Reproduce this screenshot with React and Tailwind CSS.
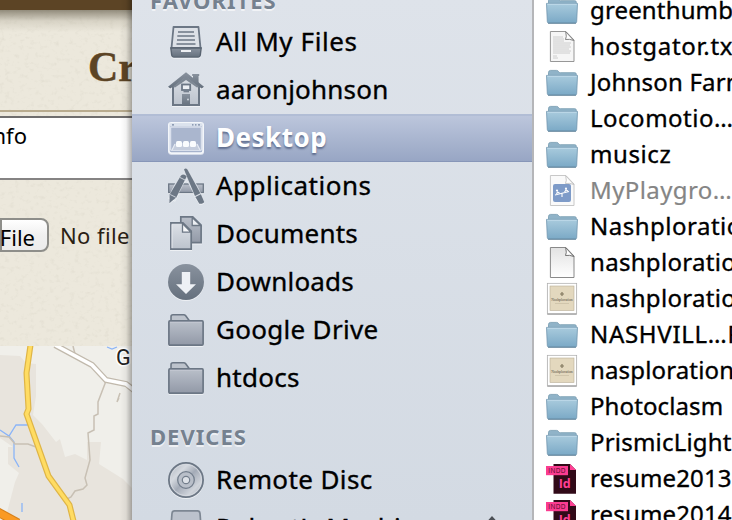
import React from "react";

const INK = "#6c7785";

function Defs() {
  return (
    <svg className="absolute h-0 w-0" aria-hidden="true">
      <defs>
        <linearGradient id="slate" x1="0" y1="0" x2="0" y2="1">
          <stop offset="0" stopColor="#89929e" />
          <stop offset="1" stopColor="#65707d" />
        </linearGradient>
        <linearGradient id="pane" x1="0" y1="0" x2="0" y2="1">
          <stop offset="0" stopColor="#bac0ca" />
          <stop offset="1" stopColor="#9299a7" />
        </linearGradient>
        <linearGradient id="light" x1="0" y1="0" x2="0" y2="1">
          <stop offset="0" stopColor="#dde1e7" />
          <stop offset="1" stopColor="#bcc3cd" />
        </linearGradient>
        <linearGradient id="disc" x1="0" y1="0" x2="1" y2="1">
          <stop offset="0" stopColor="#a9b0ba" />
          <stop offset="0.3" stopColor="#d5d9df" />
          <stop offset="0.5" stopColor="#a4abb7" />
          <stop offset="0.75" stopColor="#d0d4db" />
          <stop offset="1" stopColor="#a0a8b3" />
        </linearGradient>
        <linearGradient id="blue" x1="0" y1="0" x2="0" y2="1">
          <stop offset="0" stopColor="#a9cbdd" />
          <stop offset="1" stopColor="#7ba9c6" />
        </linearGradient>
        <linearGradient id="sheet" x1="0" y1="0" x2="0" y2="1">
          <stop offset="0" stopColor="#e2e2e2" />
          <stop offset="1" stopColor="#ffffff" />
        </linearGradient>
        <filter id="grain" x="0" y="0" width="100%" height="100%">
          <feTurbulence type="fractalNoise" baseFrequency="0.2 0.24" numOctaves="3" seed="8" />
          <feColorMatrix values="0 0 0 0 0.6  0 0 0 0 0.57  0 0 0 0 0.48  0 0 0 1.6 -0.85" />
        </filter>
      </defs>
    </svg>
  );
}

const sideIcons = {
  files: (
    <>
      <path d="M5.500 3h25l2 21h-29z" fill="#dde1e7" stroke={INK} strokeWidth="1.800" strokeLinejoin="round" />
      <path d="M10 8h16M9.300 12h17.400M9 16h18M8.500 20h19" stroke={INK} strokeWidth="1.600" />
      <path d="M2.800 24h30.400l-.9 7.200q-.3 1.900-2 1.900H5.700q-1.700 0-2-1.900z" fill="url(#slate)" stroke="#596471" strokeWidth="1.400" />
      <path d="M13 27h10" stroke="#eef0f3" strokeWidth="2" />
    </>
  ),
  home: (
    <>
      <path d="M25 12V4h-.8V2h7v2h-.6v9z" fill="url(#slate)" />
      <path d="M5 14 18 3l13 11v19H5z" fill="url(#light)" stroke={INK} strokeWidth="2" />
      <path d="M18 .200 36 14.800l-2.200 1.800L31 14.800 18 4.800 5 14.800l-2.800 1.800L0 14.800z" fill="url(#slate)" />
      <path d="M5 14.800 18 4.200l13 10.600-2 .7L18 8 7 15.500z" fill="#7d8793" />
      <rect x="14" y="12.500" width="8.200" height="5.500" fill="#eceff3" stroke={INK} strokeWidth="1.800" />
      <path d="M15.500 19.700h5.500" stroke={INK} strokeWidth="1.200" />
      <path d="M14 22h8v12h-8z" fill="url(#slate)" />
      <circle cx="20" cy="27.500" r=".9" fill="#d5dae1" />
    </>
  ),
  desktop: (
    <>
      <rect x=".9" y="2.900" width="34.200" height="30.200" rx="2.400" fill="#a6b3cd" stroke="#f3f6fa" strokeWidth="1.800" />
      <path d="M1.500 3.200h33v3.200h-33z" fill="#dbe2ed" />
      <path d="M2.700 7.100h30.600v23.200H2.700z" fill="#aab6ce" stroke="#eef2f8" strokeWidth=".9" />
      <path d="M4 4.900h2M24 4.900h1.500M27 4.900h1.500M30 4.900h2" stroke="#7786a3" strokeWidth="1.400" />
      <path d="M8 23h20l4 7H4z" fill="#c5cddd" />
      <g fill="#fafcfe"><rect x="8" y="21" width="6" height="6" rx="1.600" /><rect x="15" y="21" width="6" height="6" rx="1.600" /><rect x="22" y="21" width="6" height="6" rx="1.600" /></g>
      <path d="m7 24-3 6M29 24l3 6" stroke="#e6ebf3" strokeWidth="1.200" />
    </>
  ),
  apps: (
    <>
      <rect x=".7" y="16" width="34.600" height="8.500" fill="url(#pane)" stroke={INK} strokeWidth="1.300" />
      <path d="M15.500 7.500 3.500 31" stroke="#dce1e8" strokeWidth="8" />
      <path d="m18 3 13.500 27" stroke="#dce1e8" strokeWidth="7" />
      <path d="M13 7.600q3-2.500 5.600 1L8.400 29.200 1.400 35.200l.3-8.800z" fill={INK} />
      <path d="m12 9.500 5.600 2.800M2.200 26.500l5.600 2.800" stroke="#d5dae2" strokeWidth=".9" />
      <path d="M16 1.400q1.800-2.100 3.400.2L32.400 25.300l-5.400 2.800z" fill={INK} />
      <path d="m27.400 28.900 5.500-2.700 3.200 7.500q-.4 2.300-4.800 2z" fill={INK} />
    </>
  ),
  docs: (
    <>
      <path d="M12.800.900h11.900L33.100 9v17.600H12.800z" fill="url(#pane)" stroke={INK} strokeWidth="1.700" />
      <path d="M24.200 1.500v8h8.400z" fill="#eceff3" stroke={INK} strokeWidth="1.300" />
      <path d="M2.900 6.900h12L23.200 15v18.100H2.900z" fill="url(#light)" stroke={INK} strokeWidth="1.700" />
      <path d="M14.500 7.500v8.600h8.300z" fill="#f5f6f8" stroke={INK} strokeWidth="1.300" />
      <path d="M4 8.300v23.800" stroke="#e6e9ee" />
    </>
  ),
  down: (
    <>
      <circle cx="18" cy="18" r="18" fill="url(#slate)" />
      <path d="M13.800 8h8.400v12.200H28L18 30 8 20.200h5.800z" fill="#eef1f5" />
    </>
  ),
  folder: (
    <>
      <path d="M3 9V4.800q0-2 2-2h10.700q1.200 0 2 1L21.500 9z" fill="#bdc3cc" stroke={INK} strokeWidth="1.600" />
      <rect x=".9" y="8.900" width="34.200" height="24.200" rx="1" fill="url(#pane)" stroke={INK} strokeWidth="1.700" />
      <path d="M2 10.300h32" stroke="#c5cad3" strokeWidth=".9" />
    </>
  ),
  disc: (
    <>
      <circle cx="18" cy="18" r="17.100" fill="url(#disc)" stroke={INK} strokeWidth="1.800" />
      <circle cx="18" cy="18" r="15.600" fill="none" stroke="#d7dbe1" strokeWidth=".8" />
      <circle cx="18" cy="18" r="8.300" fill="#b9bfc9" stroke="#737e8c" strokeWidth="1.300" />
      <circle cx="18" cy="18" r="3.700" fill="#dde1e7" stroke="#737e8c" strokeWidth="1.200" />
    </>
  ),
  drive: (
    <path d="M6.500.9h23q2.200 0 2.500 2.400L34 28H2L4 3.300Q4.300.9 6.500.9z" fill="#bcc2cc" stroke="#7d8793" strokeWidth="1.700" />
  ),
};

const thumb = (
  <>
    <rect x="1" y="4.500" width="30" height="30.500" rx="1" fill="#8c8c8c" opacity=".65" />
    <rect x="1.300" y="3.300" width="29.400" height="30.200" fill="#fff" stroke="#aaa" strokeWidth=".7" />
    <rect x="4" y="6" width="24" height="24.500" fill="#e3d8be" stroke="#b9ae96" strokeWidth=".6" />
    <path d="M16 12v4M14 14h4" stroke="#82785f" strokeWidth="1.200" />
    <text x="16" y="20.500" textAnchor="middle" fontSize="3.800" fill="#574f40" fontFamily="Liberation Serif, serif">Nashploration</text>
    <path d="M9 23.500h14" stroke="#c3b89e" strokeWidth=".6" />
  </>
);

const fileIcons = {
  folder: (
    <>
      <path d="M2.500 13V8.300Q2.700 6.400 4.500 6.400h6q1.500 0 2.200 1.300.6 1 1.800 1h14.300q1.500 0 1.500 1.500V14z" fill="#90b3c8" stroke="#7499ae" strokeWidth=".8" />
      <path d="M.5 11.400h31l-.8 18.100q-.1 1.500-1.400 1.500H2.700q-1.300 0-1.400-1.500z" fill="url(#blue)" stroke="#7196ae" strokeWidth=".8" />
      <path d="M1.300 12.200h29.400" stroke="#c6e0ed" strokeWidth=".9" />
      <path d="M2 31.300h28" stroke="#567a92" strokeWidth=".8" />
    </>
  ),
  text: (
    <>
      <path d="M4.400 3.500h15.500L28 12v21.500H4.400z" fill="#f6f6f6" stroke="#8b8b8b" strokeWidth=".9" />
      <path d="M7 9h10M7 11h11M7 13h11M7 15h18M7 17h17M7 19h18M7 21h16M7 23h18M7 25h17M7 28h4M7 30h5" stroke="#c4c4c4" strokeWidth=".8" />
      <path d="M19.700 3.700Q21 9 19.500 11.500q4-.8 8.300 1z" fill="#fff" stroke="#777" strokeWidth=".9" />
    </>
  ),
  blank: (
    <>
      <path d="M4.400 3.500h15.500L28 12v21.500H4.400z" fill="url(#sheet)" stroke="#7d7d7d" strokeWidth=".9" />
      <path d="M19.700 3.700Q21 9 19.500 11.500q4-.8 8.300 1z" fill="#fff" stroke="#666" strokeWidth=".9" />
    </>
  ),
  play: (
    <>
      <path d="M4.400 3.500h15.500L28 12v21.500H4.400z" fill="#fafafa" stroke="#c2c2c2" strokeWidth=".9" />
      <path d="M19.700 3.700Q21 9 19.500 11.500q4-.8 8.300 1z" fill="#fff" stroke="#bbb" strokeWidth=".8" />
      <rect x="7" y="12" width="18" height="18" rx="2" fill="#7e9bc8" />
      <path d="m9 23 14-3.500M16 21.500V25M10.500 22l1-2 2 1M18.500 20l1.500-2 2 1" stroke="#fff" strokeWidth="1.100" fill="none" />
      <circle cx="11" cy="18.500" r="1.100" fill="#fff" /><circle cx="20" cy="16.700" r="1.100" fill="#fff" />
    </>
  ),
  thumb,
  indd: (
    <>
      <path d="M7.500 4H24l6 6v23.700H7.500z" fill="#310a18" />
      <path d="M24 4v6h6z" fill="#ff3f94" />
      <rect x="0" y="6" width="22" height="9.200" fill="#fb3c90" />
      <text x="11" y="13" textAnchor="middle" fontSize="6.500" letterSpacing=".3" fill="#4a0a26" fontFamily="Open Sans, sans-serif">INDD</text>
      <text x="18.700" y="28.300" textAnchor="middle" fontSize="12.500" fontWeight="700" fill="#ff3f94" fontFamily="Open Sans, sans-serif">Id</text>
    </>
  ),
};

const favorites = [
  ["files", "All My Files", "tracking-[0.6px]"],
  ["home", "aaronjohnson", "tracking-[0.2px]"],
  ["desktop", "Desktop", "tracking-[0.5px]", true],
  ["apps", "Applications", "tracking-[0.5px]"],
  ["docs", "Documents", "tracking-[0.2px]"],
  ["down", "Downloads", "tracking-[0.2px]"],
  ["folder", "Google Drive", "tracking-[0.3px]"],
  ["folder", "htdocs", "tracking-[0.25px]"],
];

const files = [
  ["folder", "greenthumb", "tracking-[0.15px]"],
  ["text", "hostgator.txt", "tracking-[0.7px]"],
  ["folder", "Johnson Farm", "tracking-[0.2px]"],
  ["folder", "Locomotio…", "tracking-[0.5px]"],
  ["folder", "musicz", "tracking-[0.6px]"],
  ["play", "MyPlaygro…", "tracking-[0.4px] text-[#858585] [-webkit-text-stroke:0.2px_#858585]"],
  ["folder", "Nashploration", "tracking-[0.5px]"],
  ["blank", "nashploration", "tracking-[0.3px]"],
  ["thumb", "nashploration", "tracking-[0.3px]"],
  ["folder", "NASHVILL…R", "tracking-[0.7px]"],
  ["thumb", "nasploration", "tracking-[0.15px]"],
  ["folder", "Photoclasm", "tracking-[0.1px]"],
  ["folder", "PrismicLight", "tracking-[0.2px]"],
  ["indd", "resume2013", "tracking-[0.15px]"],
  ["indd", "resume2014", "tracking-[0.15px]"],
];

function SideRow({ icon, label, tracking, active, children }) {
  return (
    <div
      className={
        "flex h-12 shrink-0 items-center pl-9 text-[26px] leading-[46px] whitespace-nowrap " +
        (active
          ? "border-t-2 border-b border-t-[#b1bdd5] border-b-[#8796b8] bg-linear-to-b from-[#bcc6dc] to-[#98a6c4] pb-px font-bold text-white [text-shadow:0_2px_2px_rgba(50,65,100,0.6)]"
          : "text-black [-webkit-text-stroke:0.35px_black]")
      }
    >
      <svg viewBox="0 0 36 36" className="h-9 w-9 shrink-0 overflow-visible drop-shadow-[0_1px_0_rgba(255,255,255,0.55)]">
        {sideIcons[icon]}
      </svg>
      <span className={"mb-0.5 ml-3 " + tracking}>{label}</span>
      {children}
    </div>
  );
}

function WebPage() {
  return (
    <div className="relative flex h-[520px] w-[132px] shrink-0 flex-col overflow-hidden bg-[#ece8dc]">
      <svg className="absolute inset-0 h-full w-full opacity-40"><rect width="132" height="520" filter="url(#grain)" /></svg>
      <div className="relative h-[10px] shrink-0 bg-[#5c4425]" />
      <div className="relative h-[22px] shrink-0 bg-linear-to-b from-[#6b6452]/70 via-[#9b9582]/25 to-transparent" />
      <div className="relative h-[78px] shrink-0 pl-[88px] font-['Liberation_Serif',serif] text-[42px] leading-[71px] font-bold text-[#5c4425] [-webkit-text-stroke:0.4px_#5c4425]">Create</div>
      <div className="relative h-[2px] shrink-0 bg-[#b8ab8e]" />
      <div className="relative mt-1 -mr-1 -ml-1 h-[64px] shrink-0 border-2 border-[#858383] border-t-[#6f6e6e] bg-white text-[22px] leading-[35px]">
        <span className="flex h-[35px] w-[29px] justify-end text-black">info</span>
      </div>
      <div className="relative mt-[38px] flex h-[34px] shrink-0 items-center whitespace-nowrap">
        <div className="flex h-[34px] w-[49px] shrink-0 justify-end rounded-r-lg border-2 border-[#8e8e8a] bg-linear-to-b from-white via-[#f0f0f0] to-[#ececec] pr-[12px] text-[22px] leading-[34px] text-black">
          <span>File</span>
        </div>
        <span className="ml-[11px] text-[22px] leading-[36px] tracking-[0.4px] text-[#2a2114]">No file</span>
      </div>
      <div className="relative mt-[94px] h-[174px] shrink-0">
        <svg viewBox="0 0 132 174" className="h-[174px] w-[132px]">
          <rect width="132" height="174" fill="#f0efea" />
          <path d="M0 9 20 10l6 7 10 1v32l-3 19 9 9 14 18 4-3 5 18 10-3 12 6V96h14l-2 22 24 15 12 12v29H5l10-38 4-9-11-9V101h5L0 92z" fill="#e8e4dd" />
          <path d="M0 84l9 6 7-11h16M9 90l5 6v16l5 9M22 157v9M107 1l5 2 5-2" fill="none" stroke="#8ab4f8" strokeWidth="1.300" />
          <path d="M0 90l9 1 6 7h13l8 3M106 35 98 56v12l-4 2v14l-6 3 2 27-5 18 2 7-4 4-8 2-4 6-4 2M73 0l2 8M120 47l-3 9 2-4" fill="none" stroke="#c8c0b4" strokeWidth="1.500" />
          <path d="m55-1 37 20 14 15 20 4 9 7" fill="none" stroke="#c1b9ac" strokeWidth="6" />
          <path d="m55-1 37 20 14 15 20 4 9 7" fill="none" stroke="#fff" strokeWidth="3.500" />
          <path d="m30.500-1-4 28 2 36-2 5 22 62 21 29 4 16" fill="none" stroke="#dfb546" strokeWidth="6" strokeLinejoin="round" />
          <path d="m30.500-1-4 28 2 36-2 5 22 62 21 29 4 16" fill="none" stroke="#ffdc62" strokeWidth="3.600" strokeLinejoin="round" />
          <path d="m-4 165 22 12" stroke="#d7801b" strokeWidth="9" /><path d="m-4 165 22 12" stroke="#fa9a24" strokeWidth="7" />
          <text x="116" y="18.500" fontSize="21.500" fontFamily="Roboto, sans-serif" fill="#222" stroke="#fff" strokeWidth="3" paintOrder="stroke">G</text>
        </svg>
      </div>
      <div className="absolute inset-y-0 right-0 w-3 bg-linear-to-r from-transparent via-black/5 to-black/30" />
    </div>
  );
}

export default function App() {
  return (
    <div className="relative flex h-[520px] w-[732px] overflow-hidden bg-white font-['Noto_Sans','Open_Sans',sans-serif]">
      <Defs />
      <WebPage />
      <aside className="flex h-[520px] w-[402px] shrink-0 flex-col overflow-hidden border-r-2 border-[#b5b6b9] bg-linear-to-b from-[#dee3ea] to-[#d3dae3]">
        <h2 className="h-[18px] shrink-0 pl-[18px] text-[22px] leading-[0px] font-bold tracking-[1px] text-[#75818f] [text-shadow:0_2px_0_rgba(255,255,255,0.6)]">FAVORITES</h2>
        {favorites.map(([icon, label, tracking, active]) => (
          <SideRow key={label} icon={icon} label={label} tracking={tracking} active={active} />
        ))}
        <h2 className="mt-[18px] h-[36px] shrink-0 pl-[18px] text-[22px] leading-[33px] font-bold tracking-[1px] text-[#75818f] [text-shadow:0_2px_0_rgba(255,255,255,0.6)]">DEVICES</h2>
        <SideRow icon="disc" label="Remote Disc" tracking="tracking-[0.4px]" />
        <SideRow icon="drive" label="Robert's Machine" tracking="w-[200px] overflow-hidden tracking-[0.3px]">
          <svg viewBox="0 0 20 20" className="mb-1 ml-[66px] h-5 w-5"><path d="m10 0 10 11H0zM0 14h20v4H0z" fill="#4b4f55" /></svg>
        </SideRow>
      </aside>
      <main className="-mt-2 flex h-[540px] flex-1 flex-col overflow-hidden bg-white">
        {files.map(([icon, label, tone], i) => (
          <div key={i} className="flex h-9 shrink-0 items-center pl-3 text-[24px] leading-9 whitespace-nowrap text-black [-webkit-text-stroke:0.35px_black]">
            <svg viewBox="0 0 32 36" className="h-9 w-8 shrink-0 [-webkit-text-stroke:0]">{fileIcons[icon]}</svg>
            <span className={"ml-3 " + tone}>{label}</span>
          </div>
        ))}
      </main>
    </div>
  );
}
